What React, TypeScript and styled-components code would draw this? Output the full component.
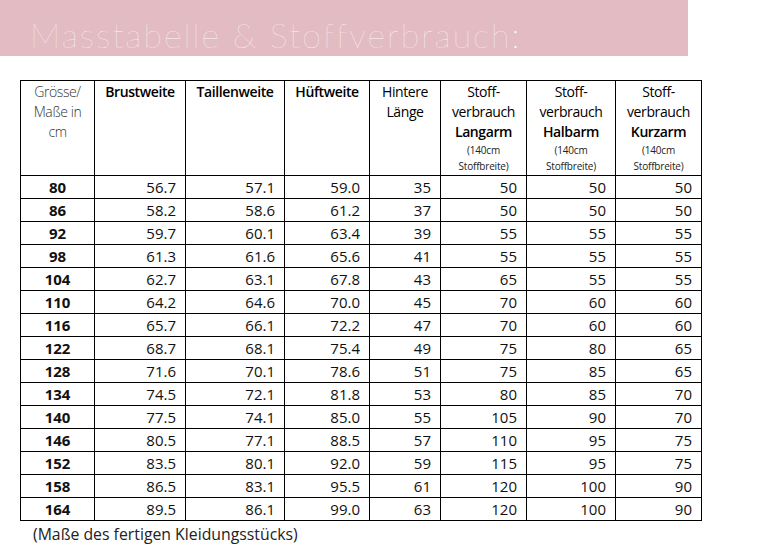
import React from 'react';
import styled, { createGlobalStyle } from 'styled-components';

const GlobalStyle = createGlobalStyle`
  html, body {
    margin: 0;
    padding: 0;
    background: #ffffff;
  }
  body {
    font-family: "Open Sans", "Noto Sans", sans-serif;
    color: #000;
  }
`;

type Row = [number, string, string, string, number, number, number, number];

const rows: Row[] = [
  [80, '56.7', '57.1', '59.0', 35, 50, 50, 50],
  [86, '58.2', '58.6', '61.2', 37, 50, 50, 50],
  [92, '59.7', '60.1', '63.4', 39, 55, 55, 55],
  [98, '61.3', '61.6', '65.6', 41, 55, 55, 55],
  [104, '62.7', '63.1', '67.8', 43, 65, 55, 55],
  [110, '64.2', '64.6', '70.0', 45, 70, 60, 60],
  [116, '65.7', '66.1', '72.2', 47, 70, 60, 60],
  [122, '68.7', '68.1', '75.4', 49, 75, 80, 65],
  [128, '71.6', '70.1', '78.6', 51, 75, 85, 65],
  [134, '74.5', '72.1', '81.8', 53, 80, 85, 70],
  [140, '77.5', '74.1', '85.0', 55, 105, 90, 70],
  [146, '80.5', '77.1', '88.5', 57, 110, 95, 75],
  [152, '83.5', '80.1', '92.0', 59, 115, 95, 75],
  [158, '86.5', '83.1', '95.5', 61, 120, 100, 90],
  [164, '89.5', '86.1', '99.0', 63, 120, 100, 90],
];

const widths = [74, 91, 99, 85, 71, 86, 89, 86];

const Page = styled.div`
  width: 760px;
  height: 557px;
  display: flex;
  flex-direction: column;
`;

const Banner = styled.div`
  width: 688px;
  height: 56px;
  background: #e2bcc2;
  display: flex;
  align-items: flex-end;
  padding-left: 30px;
  box-sizing: border-box;
`;

const Title = styled.h1`
  margin: 0 0 -1px 0;
  font-family: Lato, sans-serif;
  font-weight: 100;
  font-size: 34px;
  line-height: 44px;
  color: rgba(255, 255, 255, 0.92);
  letter-spacing: 2px;
`;

const Table = styled.table`
  margin: 24px 0 0 20px;
  border-collapse: collapse;
  table-layout: fixed;
  width: 681px;
  border: 1px solid #000;
`;

const HeadCell = styled.th<{ $light?: boolean }>`
  border: 1px solid #000;
  height: 93px;
  padding: 1px 0 0;
  vertical-align: top;
  text-align: center;
  font-size: 14px;
  line-height: 20px;
  letter-spacing: -0.4px;
  font-weight: ${(p) => (p.$light ? 300 : 600)};
  color: ${(p) => (p.$light ? '#333' : '#000')};
`;

const Plain = styled.span`
  font-weight: 400;
  display: block;
`;

const Strong = styled.span`
  font-weight: 600;
  display: block;
`;

const Small = styled.span`
  display: block;
  font-weight: 400;
  font-size: 10px;
  line-height: 16px;
  letter-spacing: -0.2px;
  color: #222;
`;

const Cell = styled.td<{ $size?: boolean }>`
  border: 1px solid #000;
  height: 22px;
  padding: 0 ${(p) => (p.$size ? '0' : '9px')} 0 0;
  text-align: ${(p) => (p.$size ? 'center' : 'right')};
  font-size: 15px;
  line-height: 22px;
  font-weight: ${(p) => (p.$size ? 700 : 400)};
  color: #111;
`;

const Note = styled.div`
  margin: 3px 0 0 33px;
  font-size: 15.8px;
  line-height: 20px;
  color: #222;
`;

const fabric = (kind: string) => (
  <>
    <Plain>Stoff-</Plain>
    <Plain>verbrauch</Plain>
    <Strong>{kind}</Strong>
    <Small>(140cm</Small>
    <Small>Stoffbreite)</Small>
  </>
);

export default function App() {
  return (
    <Page>
      <GlobalStyle />
      <Banner>
        <Title>Masstabelle &amp; Stoffverbrauch:</Title>
      </Banner>
      <Table>
        <colgroup>
          {widths.map((w, i) => (
            <col key={i} style={{ width: w }} />
          ))}
        </colgroup>
        <thead>
          <tr>
            <HeadCell $light>Grösse/<br />Maße in<br />cm</HeadCell>
            <HeadCell>Brustweite</HeadCell>
            <HeadCell>Taillenweite</HeadCell>
            <HeadCell>Hüftweite</HeadCell>
            <HeadCell><Plain>Hintere</Plain><Plain>Länge</Plain></HeadCell>
            <HeadCell>{fabric('Langarm')}</HeadCell>
            <HeadCell>{fabric('Halbarm')}</HeadCell>
            <HeadCell>{fabric('Kurzarm')}</HeadCell>
          </tr>
        </thead>
        <tbody>
          {rows.map((r) => (
            <tr key={r[0]}>
              {r.map((v, i) => (
                <Cell key={i} $size={i === 0}>{v}</Cell>
              ))}
            </tr>
          ))}
        </tbody>
      </Table>
      <Note>(Maße des fertigen Kleidungsstücks)</Note>
    </Page>
  );
}
